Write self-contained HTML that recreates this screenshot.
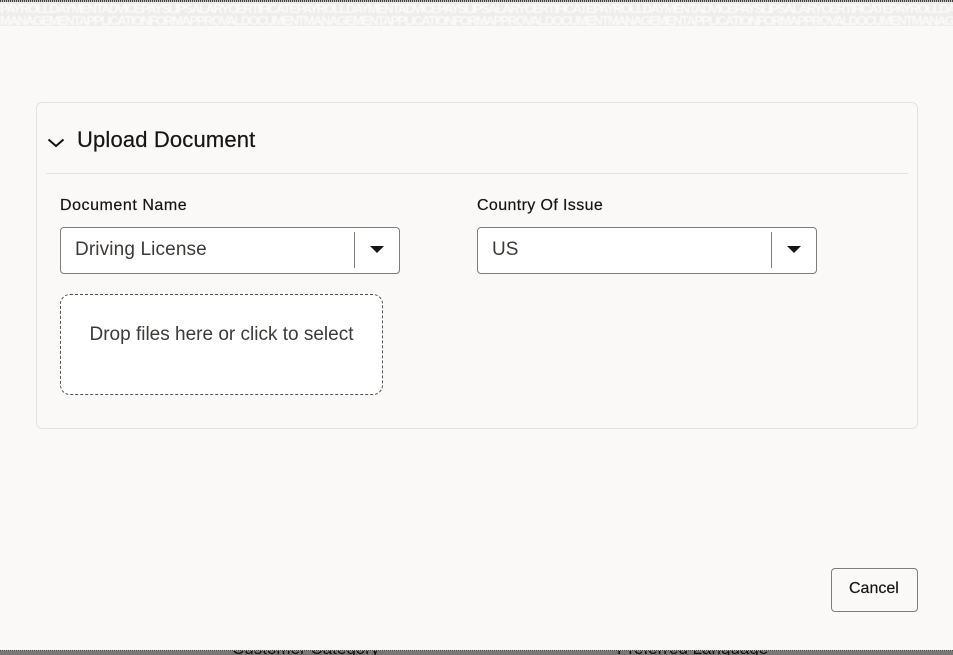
<!DOCTYPE html>
<html>
<head>
<meta charset="utf-8">
<style>
html,body{margin:0;padding:0;width:953px;height:655px;overflow:hidden;background:#faf9f7;}
body{position:relative;font-family:"Liberation Sans",sans-serif;color:#161513;}
div,span,svg{position:absolute;box-sizing:border-box;}
.t{white-space:nowrap;line-height:1;}
.topdots{left:0;top:0;width:953px;height:2px;background:repeating-linear-gradient(90deg,#444 0 1px,#bbb 1px 2px);}
.noise{left:0;top:2px;width:953px;height:24px;background-color:#eeedeb;overflow:hidden;}
.noise span{left:0;white-space:nowrap;font-size:13px;line-height:1;color:#fbfaf8;font-weight:bold;letter-spacing:-1.5px;filter:blur(.5px);}
.panel{left:36px;top:102px;width:882px;height:327px;border:1px solid #e4e2df;border-radius:6px;}
.rule{left:46px;top:173px;width:862px;height:1px;background:#e4e2df;}
.sel{height:47px;width:340px;top:227px;background:#fff;border:1px solid #807d79;border-radius:4px;}
.sel i{position:absolute;left:293px;top:4px;width:1px;height:36px;background:#807d79;}
.sel b{position:absolute;left:309px;top:18px;width:0;height:0;border-left:7.5px solid transparent;border-right:7.5px solid transparent;border-top:7px solid #161513;}
.val{font-size:19px;color:#3d3b38;}
.lab{font-size:16px;color:#161513;-webkit-text-stroke:.2px #161513;}
.drop{left:60px;top:294px;width:323px;height:101px;background:#fff;border:1px dashed #55524f;border-radius:10px;}
.btn{left:831px;top:568px;width:87px;height:44px;border:1px solid #807d79;border-radius:4px;}
.bottom{left:0;top:651px;width:953px;height:4px;background:#777;overflow:hidden;}
.bdots{left:0;top:650px;width:953px;height:1px;background:repeating-linear-gradient(90deg,#444 0 1px,#aaa 1px 2px);}
</style>
</head>
<body>
<div class="noise">
<span style="top:0;">PAYROLLDAYMENTADVICEPAYSLIPSALARYCERTIFICATEPAYROLLDAYMENTADVICEPAYSLIPSALARYCERTIFICATEPAYROLLDAYMENTADVICEPAYSLIPSALARYCERTIFICATEPAYROLLDAYMENTADVICEPAYSLIPSALARYCERTIFICATEPAYROLLDAYMENTADVICE</span>
<span style="top:12px;">MANAGEMENTAPPLICATIONFORMAPPROVALDOCUMENTMANAGEMENTAPPLICATIONFORMAPPROVALDOCUMENTMANAGEMENTAPPLICATIONFORMAPPROVALDOCUMENTMANAGEMENTAPPLICATIONFORMAPPROVALDOCUMENTMANAGEMENTAPPLICATION</span>
</div>
<div class="topdots"></div>

<div class="panel"></div>
<svg style="left:46px;top:135px" width="20" height="14" viewBox="0 0 20 14"><path d="M2.5 4.5 L10 11 L17.5 4.5" fill="none" stroke="#161513" stroke-width="2"/></svg>
<span class="t" style="left:77px;top:128.5px;font-size:22px;letter-spacing:.15px;color:#161513;-webkit-text-stroke:.2px #161513;">Upload Document</span>
<div class="rule"></div>

<span class="t lab" style="left:60px;top:198px;letter-spacing:.55px;">Document Name</span>
<div class="sel" style="left:60px;"><i></i><b></b></div>
<span class="t val" style="left:75px;top:240px;letter-spacing:.13px;">Driving License</span>

<span class="t lab" style="left:477px;top:198px;letter-spacing:.38px;">Country Of Issue</span>
<div class="sel" style="left:477px;"><i></i><b></b></div>
<span class="t val" style="left:492px;top:240px;">US</span>

<div class="drop"></div>
<span class="t val" style="left:89.5px;top:325px;">Drop files here or click to select</span>

<div class="btn"></div>
<span class="t" style="left:849px;top:581px;font-size:16px;letter-spacing:0;color:#161513;-webkit-text-stroke:.2px #161513;">Cancel</span>

<div class="bottom">
<span class="t" style="left:232px;top:-11px;font-size:17px;color:#111;">Customer Category</span>
<span class="t" style="left:617px;top:-11px;font-size:17px;color:#111;">Preferred Language</span>
</div>
<div class="bdots"></div>
</body>
</html>
